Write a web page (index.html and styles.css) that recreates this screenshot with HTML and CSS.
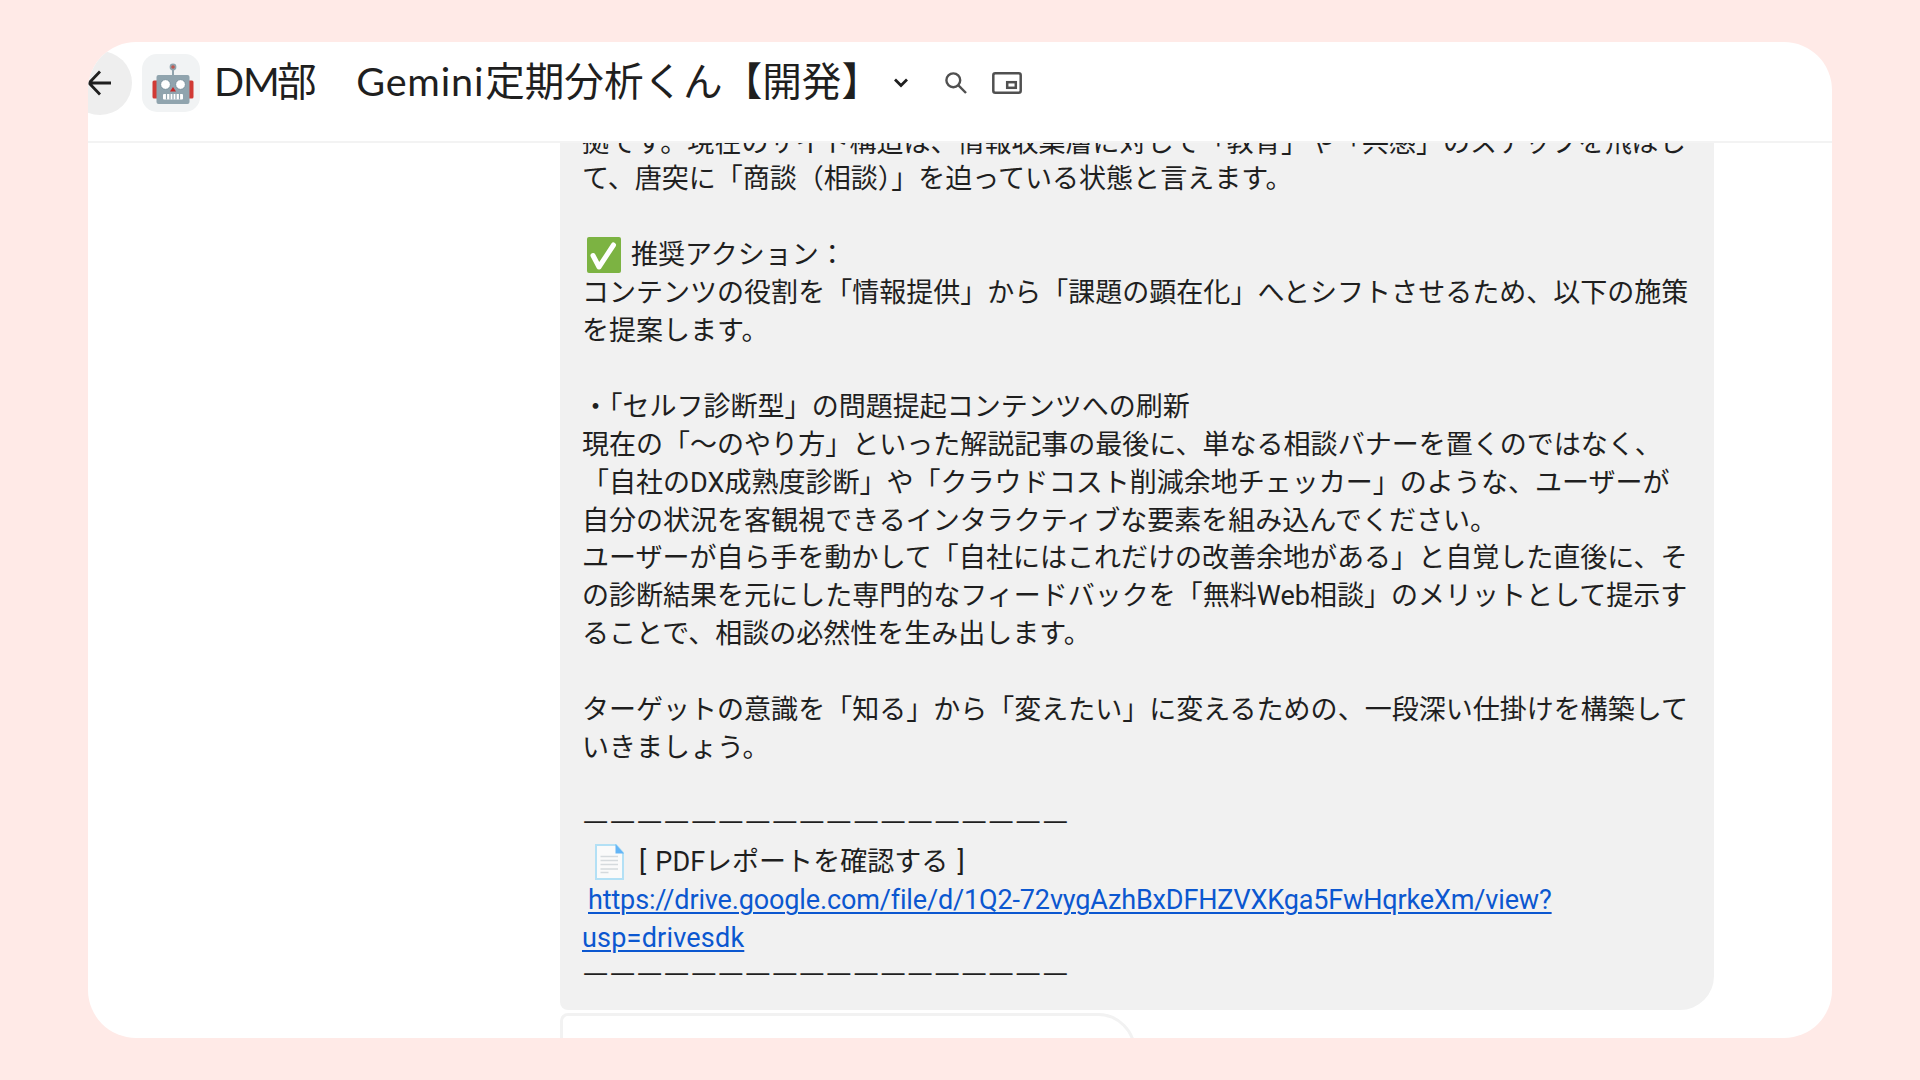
FILE: index.html
```html
<!DOCTYPE html>
<html lang="ja">
<head>
    <meta charset="UTF-8">
    <meta name="viewport" content="width=device-width, initial-scale=1.0">
    <title>DM部 Gemini定期分析くん【開発】</title>
    <link rel="stylesheet" href="styles.css">
</head>
<body>
    <div class="window">
        <header class="header">
            <button class="btn-back" aria-label="戻る">
                <svg width="24" height="26" viewBox="0 0 24 26" fill="none" stroke="#1f1f1f" stroke-width="2.8"><path d="M13 1.5L2 13l11 11.5M2 13h22"/></svg>
            </button>
            <div class="avatar">
                <svg width="42" height="42" viewBox="0 0 42 42">
                    <path d="M21 5v8" stroke="#90a4ae" stroke-width="2"/>
                    <circle cx="21" cy="4" r="3.4" fill="#90a4ae"/>
                    <circle cx="21" cy="4" r="1.8" fill="#c0574f"/>
                    <rect x="0.5" y="17.5" width="6" height="18" rx="1.5" fill="#d13a35"/>
                    <rect x="35.5" y="17.5" width="6" height="18" rx="1.5" fill="#d13a35"/>
                    <rect x="4.5" y="12" width="33" height="29" rx="2" fill="#90a4ae"/>
                    <circle cx="13.5" cy="21.5" r="4.9" fill="#fff" stroke="#78909c" stroke-width="1"/>
                    <circle cx="28.5" cy="21.5" r="4.9" fill="#fff" stroke="#78909c" stroke-width="1"/>
                    <path d="M21 24l3 4.5h-6z" fill="#c62828"/>
                    <rect x="11" y="31" width="20" height="5.5" rx="1" fill="#fff"/>
                    <path d="M14.5 31v5.5M18 31v5.5M21 31v5.5M24 31v5.5M27.5 31v5.5" stroke="#90a4ae" stroke-width="1.2"/>
                </svg>
            </div>
            <h1 class="title"><span class="title-dm">DM</span>部　<span class="title-gemini">Gemini</span>定期分析くん【開発】</h1>
            <svg class="icon-arrow" width="16" height="12" viewBox="0 0 16 12" fill="none" stroke="#1f1f1f" stroke-width="2.8"><path d="M2 2.5l6 6 6-6"/></svg>
            <svg class="icon-search" width="22" height="22" viewBox="0 0 22 22" fill="none" stroke="#505050" stroke-width="2.4"><circle cx="8.3" cy="8.3" r="6.9"/><path d="M13.2 13.2l7.8 7.8"/></svg>
            <svg class="icon-pip" width="30" height="22" viewBox="0 0 30 22" fill="none" stroke="#505050" stroke-width="2.5"><rect x="1.3" y="1.3" width="27.4" height="19.4" rx="2"/><rect x="15.2" y="10.2" width="8.6" height="5.6"/></svg>
        </header>

        <main class="messages">
            <div class="bubble">
                <p class="line-first">拠です。現在のサイト構造は、情報収集層に対して「教育」や「共感」のステップを飛ばし</p>
                <p>て、唐突に「商談（相談）」を迫っている状態と言えます。</p>
                <p></p>
                <p class="line-check"><svg width="34" height="36" viewBox="0 0 34 36"><rect width="34" height="36" rx="2" fill="#7cb342"/><path d="M6 18.5L12 30 26.5 8" fill="none" stroke="#fff" stroke-width="5" stroke-linecap="round" stroke-linejoin="round"/></svg>推奨アクション：</p>
                <p>コンテンツの役割を「情報提供」から「課題の顕在化」へとシフトさせるため、以下の施策</p>
                <p>を提案します。</p>
                <p></p>
                <p>・「セルフ診断型」の問題提起コンテンツへの刷新</p>
                <p>現在の「～のやり方」といった解説記事の最後に、単なる相談バナーを置くのではなく、</p>
                <p>「自社のDX成熟度診断」や「クラウドコスト削減余地チェッカー」のような、ユーザーが</p>
                <p>自分の状況を客観視できるインタラクティブな要素を組み込んでください。</p>
                <p>ユーザーが自ら手を動かして「自社にはこれだけの改善余地がある」と自覚した直後に、そ</p>
                <p>の診断結果を元にした専門的なフィードバックを「無料Web相談」のメリットとして提示す</p>
                <p>ることで、相談の必然性を生み出します。</p>
                <p></p>
                <p>ターゲットの意識を「知る」から「変えたい」に変えるための、一段深い仕掛けを構築して</p>
                <p>いきましょう。</p>
                <p></p>
                <p class="dashes">——————————————————</p>
                <p class="line-pdf"><svg width="29" height="36" viewBox="0 0 29 36"><path d="M1 1h20l7 8v26H1z" fill="#fafafa" stroke="#b3e0f5" stroke-width="2"/><path d="M20.5 0L29 9.5h-8.5z" fill="#64b5f6"/><path d="M5.5 12.5h17.5M5.5 16.5h17.5M5.5 20.5h17.5M5.5 25h17.5M5.5 28.5h8" stroke="#d5dadd" stroke-width="1.5"/></svg>[ PDFレポートを確認する ]</p>
                <p class="line-url"><a href="#">https://drive.google.com/file/d/1Q2-72vygAzhBxDFHZVXKga5FwHqrkeXm/view?</a></p>
                <p class="line-usp"><a href="#">usp=drivesdk</a></p>
                <p class="dashes">——————————————————</p>
            </div>
            <div class="card"></div>
        </main>
    </div>
</body>
</html>
```

FILE: styles.css
```css
* {
    box-sizing: border-box;
}

body {
    margin: 0;
    height: 100vh;
    padding: 42px 88px;
    overflow: hidden;
    background-color: #ffeae7;
    color: #1f1f1f;
    font-family: Roboto, "Noto Sans CJK JP", sans-serif;
}

.window {
    display: flex;
    flex-direction: column;
    height: 996px;
    overflow: hidden;
    border-radius: 48px;
    background-color: #fff;
}

.header {
    display: flex;
    align-items: center;
    height: 101px;
    padding-bottom: 17px;
    flex-shrink: 0;
    border-bottom: 2px solid #f3f3f3;
}

.btn-back {
    display: flex;
    align-items: center;
    justify-content: center;
    width: 64px;
    height: 64px;
    margin-left: -20px;
    padding: 0;
    border: 0;
    border-radius: 50%;
    background-color: #eee;
    flex-shrink: 0;
}

.btn-back svg {
    margin-right: 2px;
}

.avatar {
    display: flex;
    align-items: center;
    justify-content: center;
    width: 58px;
    height: 58px;
    margin-left: 10px;
    padding: 2px 0 0 4px;
    border-radius: 15px;
    background-color: #f1f3f4;
}

.title {
    margin: 0 0 7px 14px;
    font-size: 39.6px;
    font-weight: 400;
    line-height: 58px;
    white-space: nowrap;
    font-family: "Noto Sans CJK JP", sans-serif;
}

.title span {
    display: inline-block;
    font-family: Lato, sans-serif;
}

.title-dm {
    width: 63px;
    letter-spacing: -1px;
}

.title-gemini {
    width: 129px;
    letter-spacing: 0.8px;
}

.icon-arrow {
    margin-left: 12px;
}

.icon-search {
    margin-left: 36px;
}

.icon-pip {
    margin-left: 25px;
}

.messages {
    flex: 1;
    padding-left: 472px;
    overflow: hidden;
}

.bubble {
    width: 1154px;
    height: 887px;
    margin-top: -20px;
    padding-left: 22px;
    border-radius: 0 0 34px 8px;
    background-color: #f1f1f1;
    font-size: 27.03px;
    line-height: 37.96px;
}

.bubble p {
    height: 37.96px;
    margin: 0;
    white-space: nowrap;
}

.bubble .line-first {
    line-height: 40px;
}

.bubble .line-check,
.bubble .line-pdf {
    display: flex;
    align-items: center;
}

.line-check svg {
    margin: 0 10px 2px 5px;
}

.bubble .line-pdf {
    white-space: pre;
    word-spacing: 2.5px;
}

.line-pdf svg {
    margin: 0 15px 2px 13px;
}

.bubble .dashes {
    font-size: 35.05px;
    font-weight: 300;
    line-height: 34px;
}

.line-url {
    padding-left: 6px;
    letter-spacing: -0.15px;
}

.line-usp {
    letter-spacing: 0.2px;
}

.bubble a {
    color: #0b57d0;
    text-decoration-thickness: 2px;
    text-underline-offset: 3px;
}

/* 次のメッセージの枠 */
.card {
    width: 576px;
    height: 120px;
    margin-top: 3px;
    border: 3px solid #f2f2f2;
    border-radius: 8px 38px 0 0;
}
```
